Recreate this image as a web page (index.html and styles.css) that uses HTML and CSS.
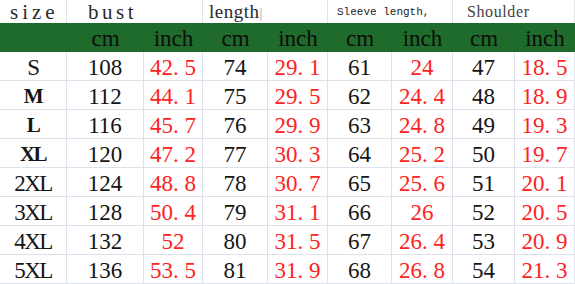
FILE: index.html
```html
<!DOCTYPE html>
<html>
<head>
<meta charset="utf-8">
<link rel="stylesheet" href="styles.css">
</head>
<body>
<div class="sheet">
  <div class="hd c1 l0">size</div>
  <div class="hd span bust">bust</div>
  <div class="hd span length">length<span class="tick">|</span></div>
  <div class="hd span sleeve">Sleeve length<span class="comma">,</span></div>
  <div class="hd span shoulder">Shoulder</div>

  <div class="gr c1"></div>
  <div class="gr">cm</div><div class="gr">inch</div>
  <div class="gr">cm</div><div class="gr">inch</div>
  <div class="gr">cm</div><div class="gr">inch</div>
  <div class="gr">cm</div><div class="gr">inch</div>

  <div class="td c1">S</div><div class="td">108</div><div class="td r">42<span class="dot">.</span>5</div><div class="td">74</div><div class="td r">29<span class="dot">.</span>1</div><div class="td">61</div><div class="td r">24</div><div class="td">47</div><div class="td r">18<span class="dot">.</span>5</div>
  <div class="td c1 b">M</div><div class="td">112</div><div class="td r">44<span class="dot">.</span>1</div><div class="td">75</div><div class="td r">29<span class="dot">.</span>5</div><div class="td">62</div><div class="td r">24<span class="dot">.</span>4</div><div class="td">48</div><div class="td r">18<span class="dot">.</span>9</div>
  <div class="td c1 b">L</div><div class="td">116</div><div class="td r">45<span class="dot">.</span>7</div><div class="td">76</div><div class="td r">29<span class="dot">.</span>9</div><div class="td">63</div><div class="td r">24<span class="dot">.</span>8</div><div class="td">49</div><div class="td r">19<span class="dot">.</span>3</div>
  <div class="td c1 b">XL</div><div class="td">120</div><div class="td r">47<span class="dot">.</span>2</div><div class="td">77</div><div class="td r">30<span class="dot">.</span>3</div><div class="td">64</div><div class="td r">25<span class="dot">.</span>2</div><div class="td">50</div><div class="td r">19<span class="dot">.</span>7</div>
  <div class="td c1">2XL</div><div class="td">124</div><div class="td r">48<span class="dot">.</span>8</div><div class="td">78</div><div class="td r">30<span class="dot">.</span>7</div><div class="td">65</div><div class="td r">25<span class="dot">.</span>6</div><div class="td">51</div><div class="td r">20<span class="dot">.</span>1</div>
  <div class="td c1">3XL</div><div class="td">128</div><div class="td r">50<span class="dot">.</span>4</div><div class="td">79</div><div class="td r">31<span class="dot">.</span>1</div><div class="td">66</div><div class="td r">26</div><div class="td">52</div><div class="td r">20<span class="dot">.</span>5</div>
  <div class="td c1">4XL</div><div class="td">132</div><div class="td r">52</div><div class="td">80</div><div class="td r">31<span class="dot">.</span>5</div><div class="td">67</div><div class="td r">26<span class="dot">.</span>4</div><div class="td">53</div><div class="td r">20<span class="dot">.</span>9</div>
  <div class="td c1">5XL</div><div class="td">136</div><div class="td r">53<span class="dot">.</span>5</div><div class="td">81</div><div class="td r">31<span class="dot">.</span>9</div><div class="td">68</div><div class="td r">26<span class="dot">.</span>8</div><div class="td">54</div><div class="td r">21<span class="dot">.</span>3</div>
</div>
</body>
</html>
```

FILE: styles.css
```css
html, body {
  margin: 0;
  padding: 0;
  background: #ffffff;
}
.sheet {
  display: grid;
  grid-template-columns: 67px 77px 59px 65px 60px 64px 61px 62px 60px;
  grid-template-rows: 23px 29px repeat(8, 29px);
  width: 575px;
  height: 284px;
  overflow: hidden;
  font-family: "Liberation Serif", "Times New Roman", serif;
  color: #111;
}
.hd {
  border-right: 1px solid #dfe2ea;
  box-sizing: border-box;
  white-space: nowrap;
  color: #2a2a2a;
  line-height: 23px;
}
.span { grid-column: span 2; }
.l0 {
  padding-left: 10px;
  padding-top: 1px;
  font-size: 21px;
  letter-spacing: 4px;
  line-height: 23px;
}
.bust {
  padding-left: 21px;
  padding-top: 1px;
  font-size: 21px;
  letter-spacing: 3.5px;
  line-height: 23px;
}
.length {
  padding-left: 6px;
  font-size: 19px;
  letter-spacing: 0.5px;
  line-height: 24px;
}
.tick { color: #8aa; font-size: 14px; }
.sleeve {
  padding-left: 9px;
  font-family: "Liberation Mono", monospace;
  font-size: 11px;
  color: #222;
  line-height: 25px;
}
.comma { font-size: 11px; }
.shoulder {
  padding-left: 14px;
  font-size: 16px;
  letter-spacing: 0.6px;
  color: #444;
  line-height: 24px;
}
.gr {
  background: #1f6b2b;
  color: #0c0c0c;
  font-size: 23px;
  display: flex;
  align-items: center;
  justify-content: center;
  padding-top: 2px;
  box-sizing: border-box;
}
.td {
  display: flex;
  align-items: center;
  justify-content: center;
  font-size: 23px;
  border-right: 1px solid #dde1ec;
  border-bottom: 1px solid #dde1ec;
  box-sizing: border-box;
  padding-top: 3px;
  color: #151515;
}
.td.c1 { letter-spacing: -1.5px; }
.td.b { font-weight: bold; font-size: 21px; }
.td.r { color: #ff2222; }
.dot {
  display: inline-block;
  width: 0.5em;
  text-align: left;
}
```
